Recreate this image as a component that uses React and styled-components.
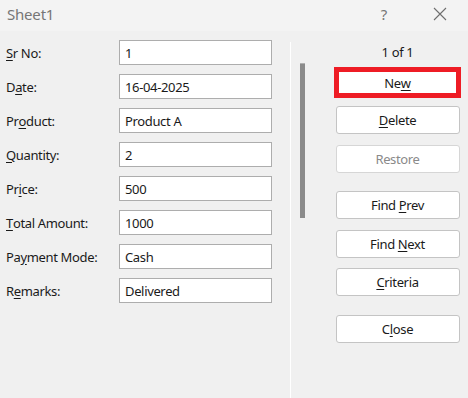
import React from 'react'
import styled, { createGlobalStyle } from 'styled-components'

const GlobalStyle = createGlobalStyle`
  html, body {
    margin: 0;
    padding: 0;
    background: #f0f0f0;
  }
  body {
    font-family: "Noto Sans", "Open Sans", sans-serif;
    letter-spacing: -0.35px;
  }
`

const fields = [
  { pre: '', key: 'S', post: 'r No:', value: '1' },
  { pre: 'D', key: 'a', post: 'te:', value: '16-04-2025' },
  { pre: 'Pr', key: 'o', post: 'duct:', value: 'Product A' },
  { pre: '', key: 'Q', post: 'uantity:', value: '2' },
  { pre: 'Pr', key: 'i', post: 'ce:', value: '500' },
  { pre: '', key: 'T', post: 'otal Amount:', value: '1000' },
  { pre: 'Pa', key: 'y', post: 'ment Mode:', value: 'Cash' },
  { pre: 'R', key: 'e', post: 'marks:', value: 'Delivered' },
]

const buttons = [
  { pre: 'Ne', key: 'w', post: '', top: 6, variant: 'focus' },
  { pre: '', key: 'D', post: 'elete', top: 8 },
  { pre: 'Restore', key: '', post: '', top: 11, variant: 'disabled' },
  { pre: 'Find ', key: 'P', post: 'rev', top: 18 },
  { pre: 'Find ', key: 'N', post: 'ext', top: 11 },
  { pre: '', key: 'C', post: 'riteria', top: 10 },
  { pre: 'C', key: 'l', post: 'ose', top: 19 },
]

function App() {
  return (
    <Dialog>
      <GlobalStyle />
      <TitleBar>
        <Title>Sheet1</Title>
        <TitleActions>
          <Help>?</Help>
          <CloseIcon width="16" height="16" viewBox="0 0 16 16">
            <path d="M2 2 L14 14 M14 2 L2 14" stroke="#6e6e6e" strokeWidth="1.1" fill="none" />
          </CloseIcon>
        </TitleActions>
      </TitleBar>

      <Body>
        <FormPanel>
          {fields.map((f) => (
            <React.Fragment key={f.post}>
              <Label>
                {f.pre}
                <Key>{f.key}</Key>
                {f.post}
              </Label>
              <Field>{f.value}</Field>
            </React.Fragment>
          ))}
        </FormPanel>

        <Divider />

        <ScrollTrack>
          <ScrollThumb />
        </ScrollTrack>

        <ButtonColumn>
          <Counter>1 of 1</Counter>
          {buttons.map((b) => (
            <ActionButton key={b.pre + b.post} $top={b.top} $variant={b.variant}>
              {b.pre}
              {b.key && <Key>{b.key}</Key>}
              {b.post}
            </ActionButton>
          ))}
        </ButtonColumn>
      </Body>
    </Dialog>
  )
}

export default App

const Dialog = styled.div`
  width: 468px;
  height: 398px;
  background: #f0f0f0;
  display: flex;
  flex-direction: column;
  overflow: hidden;
`

const TitleBar = styled.div`
  height: 31px;
  background: #f3f3f3;
  display: flex;
  align-items: center;
  justify-content: space-between;
  padding: 0 20px 0 7px;
  flex-shrink: 0;
`

const Title = styled.div`
  font-size: 15px;
  color: #767676;
  margin-top: -4px;
  letter-spacing: -0.2px;
`

const TitleActions = styled.div`
  display: flex;
  align-items: center;
  gap: 45px;
  margin-top: -4px;
`

const Help = styled.span`
  font-size: 15px;
  color: #767676;
`

const CloseIcon = styled.svg`
  display: block;
`

const Body = styled.div`
  flex: 1;
  display: flex;
  align-items: stretch;
`

const FormPanel = styled.div`
  width: 284px;
  padding: 9px 0 0 6px;
  display: grid;
  grid-template-columns: 113px 153px;
  grid-auto-rows: 25px;
  row-gap: 9px;
  align-content: start;
`

const Label = styled.div`
  font-size: 13px;
  color: #1a1a1a;
  display: flex;
  align-items: center;
  white-space: pre;
`

const Key = styled.span`
  text-decoration: underline;
  text-underline-offset: 2px;
`

const Field = styled.div`
  box-sizing: border-box;
  height: 25px;
  border: 1px solid #adadad;
  background: #ffffff;
  font-size: 13px;
  color: #1a1a1a;
  padding: 0 5px;
  display: flex;
  align-items: center;
`

const Divider = styled.div`
  width: 1px;
  background: #ffffff;
  margin-top: 11px;
`

const ScrollTrack = styled.div`
  width: 5px;
  margin-left: 9px;
  padding-top: 32px;
`

const ScrollThumb = styled.div`
  width: 5px;
  height: 155px;
  background: #8b8b8b;
  border-top: 1px solid #b0b0b0;
  box-sizing: border-box;
`

const ButtonColumn = styled.div`
  width: 127px;
  margin-left: 29px;
  display: flex;
  flex-direction: column;
  align-items: center;
  padding-top: 12px;
`

const Counter = styled.div`
  font-size: 13px;
  color: #1a1a1a;
  line-height: 18px;
`

const ActionButton = styled.div`
  box-sizing: border-box;
  margin-top: ${(p) => p.$top}px;
  width: ${(p) => (p.$variant === 'focus' ? 127 : 124)}px;
  height: ${(p) => (p.$variant === 'focus' ? 31 : 28)}px;
  background: #ffffff;
  border: ${(p) =>
    p.$variant === 'focus'
      ? '5px solid #ee1c25'
      : p.$variant === 'disabled'
      ? '1px solid #d6d6d6'
      : '1px solid #c4c4c4'};
  border-radius: ${(p) => (p.$variant === 'focus' ? 0 : 3)}px;
  color: ${(p) => (p.$variant === 'disabled' ? '#8a8a8a' : '#1a1a1a')};
  font-size: 13px;
  display: flex;
  align-items: center;
  justify-content: center;
  white-space: pre;
`
